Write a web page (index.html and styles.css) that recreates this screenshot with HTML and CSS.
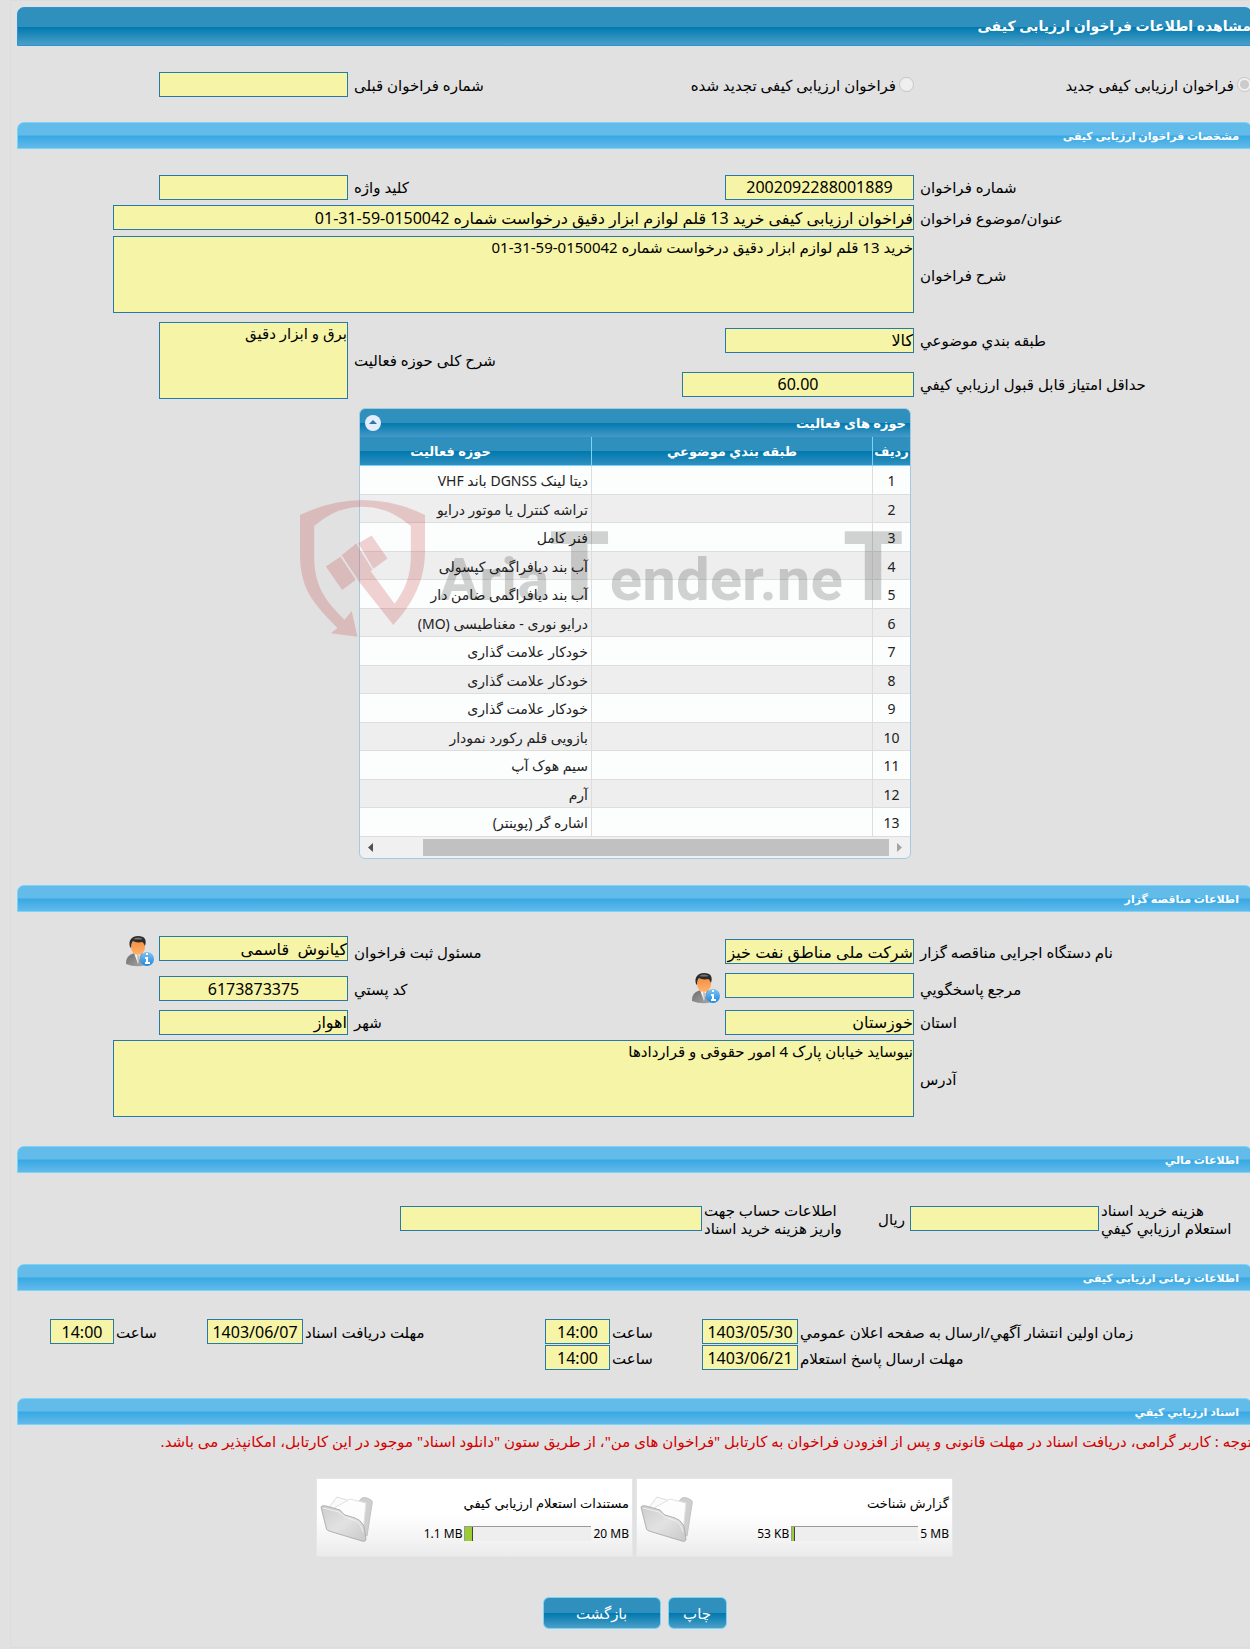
FILE: index.html
```html
<!DOCTYPE html>
<html lang="fa" dir="rtl">
<head>
    <meta charset="UTF-8">
    <meta name="viewport" content="width=device-width, initial-scale=1.0">
    <title>مشاهده اطلاعات فراخوان ارزیابی کیفی</title>
    <link rel="stylesheet" href="styles.css">
</head>
<body>

<!-- shared icons -->
<svg class="sprite" aria-hidden="true">
    <defs>
        <linearGradient id="skin" x1="0" y1="0" x2="0" y2="1">
            <stop offset="0" stop-color="#f58a3c"/>
            <stop offset="1" stop-color="#ffb36b"/>
        </linearGradient>
        <linearGradient id="suit" x1="0" y1="0" x2="1" y2="1">
            <stop offset="0" stop-color="#6c6c6c"/>
            <stop offset="1" stop-color="#a9a9a9"/>
        </linearGradient>
        <linearGradient id="info" x1="0" y1="0" x2="0" y2="1">
            <stop offset="0" stop-color="#7cc4f6"/>
            <stop offset="1" stop-color="#1f86dc"/>
        </linearGradient>
        <linearGradient id="flap" x1="0" y1="0" x2="1" y2="1">
            <stop offset="0" stop-color="#cccccc"/>
            <stop offset="0.5" stop-color="#e2e2e2"/>
            <stop offset="1" stop-color="#c8c8c8"/>
        </linearGradient>
    </defs>
    <symbol id="person" viewBox="0 0 28 31">
        <path d="M0 27C0 21 4 18 9 17L15 17C19 18 20 21 20 24V29Q10 32 0 28Z" fill="url(#suit)"/>
        <path d="M8 17L12 28L15 17Z" fill="#f2f2f2"/>
        <path d="M11 19L12 28L14 20Z" fill="#bcbcbc"/>
        <ellipse cx="12" cy="11" rx="7" ry="8" fill="url(#skin)"/>
        <path d="M4 11C2 4 6 0 12 0C19 0 21 4 19 10C18 8 17 6 16 6C12 7 9 6 7 5Q5 7 5 12Z" fill="#2c2c2c"/>
        <path d="M7 3Q12 0 17 3Q12 4 7 3Z" fill="#777"/>
        <circle cx="21" cy="23" r="7" fill="url(#info)"/>
        <path d="M19 21H22V26H24V28H19V26H20V23H19ZM20 17H22V19H20Z" fill="#fff"/>
    </symbol>
    <symbol id="folder" viewBox="0 0 54 48">
        <path d="M12 14L30 6L38 8L42 4Q44 3 47 4L51 6Q53 7 52 10L47 42L40 40Z" fill="#cfcfcf" stroke="#c2c2c2"/>
        <path d="M10 12L17 3L40 10L43 36L14 30Z" fill="#fafafa" stroke="#dedede"/>
        <path d="M14 14L30 5L46 9L43 38L14 30Z" fill="#fdfdfd" stroke="#e2e2e2"/>
        <path d="M1 13Q2 11 6 12L20 16Q23 20 25 21L35 24Q40 25 44 32L46 46Q45 48 42 47L9 37Q6 36 6 33Z" fill="url(#flap)" stroke="#b0b0b0"/>
        <path d="M3 14L19 18L25 23L36 27Q41 30 43 38" fill="none" stroke="#efefef"/>
    </symbol>
</svg>

<main class="panel">
    <h1 class="title-bar">مشاهده اطلاعات فراخوان ارزیابی کیفی</h1>

    <div class="form-grid call-type">
        <label class="radio"><input type="radio" name="callType" checked disabled>فراخوان ارزیابی کیفی جدید</label>
        <div class="pair">
            <label class="radio"><input type="radio" name="callType" disabled>فراخوان ارزیابی کیفی تجدید شده</label>
            <label class="label" for="prevNo">شماره فراخوان قبلی</label>
        </div>
        <div class="col-left"><input class="field" id="prevNo" type="text" readonly></div>
    </div>

    <h2 class="section-bar">مشخصات فراخوان ارزیابی کیفی</h2>
    <div class="form-grid call-info">
        <label class="label" for="callNo">شماره فراخوان</label>
        <input class="field center" id="callNo" type="text" value="2002092288001889" readonly>
        <label class="label" for="keyword">کلید واژه</label>
        <div class="col-left"><input class="field" id="keyword" type="text" readonly></div>

        <label class="label" for="subject">عنوان/موضوع فراخوان</label>
        <input class="field wide" id="subject" type="text" value="فراخوان ارزیابی کیفی خرید 13 قلم لوازم ابزار دقیق درخواست شماره 0150042-59-31-01" readonly>

        <label class="label" for="description">شرح فراخوان</label>
        <textarea class="field area wide" id="description" readonly>خرید 13 قلم لوازم ابزار دقیق درخواست شماره 0150042-59-31-01</textarea>

        <label class="label" for="category">طبقه بندي موضوعي</label>
        <input class="field" id="category" type="text" value="کالا" readonly>
        <label class="label two-rows" for="scope">شرح کلی حوزه فعالیت</label>
        <div class="col-left two-rows"><textarea class="field area" id="scope" readonly>برق و ابزار دقیق</textarea></div>

        <label class="label" for="minScore">حداقل امتیاز قابل قبول ارزیابي کیفي</label>
        <input class="field center score" id="minScore" type="text" value="60.00" readonly>
    </div>

    <div class="activity">
        <div class="activity-caption">
            <span>حوزه های فعالیت</span>
            <button class="collapse" type="button" aria-label="بستن">
                <svg width="16" height="16" viewBox="0 0 16 16"><circle cx="8" cy="8" r="8" fill="#e3edfb"/><path d="M4 9L8 5L12 9Z" fill="#2779aa"/></svg>
            </button>
        </div>
        <table class="activity-table">
            <thead>
                <tr><th class="col-no">ردیف</th><th class="col-cat">طبقه بندي موضوعي</th><th>حوزه فعالیت</th></tr>
            </thead>
            <tbody>
                <tr><td>1</td><td></td><td>دیتا لینک DGNSS باند VHF</td></tr>
                <tr><td>2</td><td></td><td>تراشه کنترل یا موتور درایو</td></tr>
                <tr><td>3</td><td></td><td>فنر کامل</td></tr>
                <tr><td>4</td><td></td><td>آب بند دیافراگمی کپسولی</td></tr>
                <tr><td>5</td><td></td><td>آب بند دیافراگمی ضامن دار</td></tr>
                <tr><td>6</td><td></td><td>درایو نوری - مغناطیسی (MO)</td></tr>
                <tr><td>7</td><td></td><td>خودکار علامت گذاری</td></tr>
                <tr><td>8</td><td></td><td>خودکار علامت گذاری</td></tr>
                <tr><td>9</td><td></td><td>خودکار علامت گذاری</td></tr>
                <tr><td>10</td><td></td><td>بازویی قلم رکورد نمودار</td></tr>
                <tr><td>11</td><td></td><td>سیم هوک آپ</td></tr>
                <tr><td>12</td><td></td><td>آرم</td></tr>
                <tr><td>13</td><td></td><td>اشاره گر (پوینتر)</td></tr>
            </tbody>
        </table>
        <div class="scrollbar">
            <span class="arrow arrow-right"></span>
            <span class="thumb"></span>
            <span class="arrow arrow-left"></span>
        </div>

        <div class="watermark" dir="ltr">
            <svg class="shield" viewBox="48 300 300 412" preserveAspectRatio="none">
                <path d="M48 345Q125 300 198 300Q275 300 348 345V455C348 540 320 610 272 676L186 540L215 510L275 612C300 570 314 530 314 470V378Q260 320 198 320Q135 320 82 378V470C82 560 110 605 155 660L172 634L186 711L122 701L138 685C80 610 48 570 48 460Z"/>
                <path d="M110 500L145 471L182 540L149 571ZM148 466L183 431L222 510L187 540ZM188 430L220 407L258 476L224 507Z"/>
            </svg>
            <span class="brand">Aria<b>T</b>ender.ne<b>T</b></span>
        </div>
    </div>

    <h2 class="section-bar">اطلاعات مناقصه گزار</h2>
    <div class="form-grid organizer">
        <label class="label" for="org">نام دستگاه اجرایی مناقصه گزار</label>
        <input class="field" id="org" type="text" value="شرکت ملی مناطق نفت خیز جنوب" readonly>
        <label class="label" for="registrar">مسئول ثبت فراخوان</label>
        <div class="col-left top">
            <input class="field" id="registrar" type="text" value="کیانوش  قاسمی" readonly>
            <svg class="person"><use href="#person"/></svg>
        </div>

        <label class="label" for="contact">مرجع پاسخگویي</label>
        <div class="with-icon top">
            <input class="field" id="contact" type="text" readonly>
            <svg class="person"><use href="#person"/></svg>
        </div>
        <label class="label" for="postal">کد پستي</label>
        <div class="col-left"><input class="field center" id="postal" type="text" value="6173873375" readonly></div>

        <label class="label" for="province">استان</label>
        <input class="field" id="province" type="text" value="خوزستان" readonly>
        <label class="label" for="city">شهر</label>
        <div class="col-left"><input class="field" id="city" type="text" value="اهواز" readonly></div>

        <label class="label" for="address">آدرس</label>
        <textarea class="field area wide" id="address" readonly>نیوساید خیابان پارک 4 امور حقوقی و قراردادها</textarea>
    </div>

    <h2 class="section-bar">اطلاعات مالي</h2>
    <div class="finance">
        <label class="two-line doc-cost" for="docCost">هزینه خرید اسناد<br>استعلام ارزیابي کیفي</label>
        <input class="field" id="docCost" type="text" readonly>
        <span class="unit">ریال</span>
        <label class="two-line" for="account">اطلاعات حساب جهت<br>واریز هزینه خرید اسناد</label>
        <input class="field account" id="account" type="text" readonly>
    </div>

    <h2 class="section-bar">اطلاعات زمانی ارزیابی کیفی</h2>
    <div class="schedule">
        <label for="pubDate">زمان اولین انتشار آگهي/ارسال به صفحه اعلان عمومي</label>
        <input class="field center" id="pubDate" type="text" value="1403/05/30" readonly>
        <label for="pubTime">ساعت</label>
        <input class="field center" id="pubTime" type="text" value="14:00" readonly>
        <label for="docDate">مهلت دریافت اسناد</label>
        <input class="field center" id="docDate" type="text" value="1403/06/07" readonly>
        <label for="docTime">ساعت</label>
        <input class="field center" id="docTime" type="text" value="14:00" readonly>

        <label for="ansDate">مهلت ارسال پاسخ استعلام</label>
        <input class="field center" id="ansDate" type="text" value="1403/06/21" readonly>
        <label for="ansTime">ساعت</label>
        <input class="field center" id="ansTime" type="text" value="14:00" readonly>
    </div>

    <h2 class="section-bar">اسناد ارزیابي کیفي</h2>
    <p class="notice">توجه : کاربر گرامی، دریافت اسناد در مهلت قانونی و پس از افزودن فراخوان به کارتابل "فراخوان های من"، از طریق ستون "دانلود اسناد" موجود در این کارتابل، امکانپذیر می باشد.</p>

    <div class="docs">
        <div class="doc">
            <div class="doc-body">
                <div class="doc-name">گزارش شناخت</div>
                <div class="usage">
                    <bdi>5 MB</bdi>
                    <div class="meter"><div class="used" style="width: 3px"></div></div>
                    <bdi>53 KB</bdi>
                </div>
            </div>
            <svg class="folder"><use href="#folder"/></svg>
        </div>
        <div class="doc">
            <div class="doc-body">
                <div class="doc-name">مستندات استعلام ارزیابي کیفي</div>
                <div class="usage">
                    <bdi>20 MB</bdi>
                    <div class="meter"><div class="used" style="width: 8px"></div></div>
                    <bdi>1.1 MB</bdi>
                </div>
            </div>
            <svg class="folder"><use href="#folder"/></svg>
        </div>
    </div>

    <div class="actions">
        <button class="btn" type="button">چاپ</button>
        <button class="btn btn-back" type="button">بازگشت</button>
    </div>
</main>

</body>
</html>
```
FILE: styles.css
```css
* {
    box-sizing: border-box;
}
body {
    margin: 0;
    background: #e1e1e1;
    color: #000;
    font-family: Tahoma, "Noto Sans", "DejaVu Sans", sans-serif;
    font-size: 15px;
    line-height: 20px;
    overflow-x: hidden;
}
.sprite {
    position: absolute;
    width: 0;
    height: 0;
}
.panel {
    margin: 0 -2px 0 10px;
    padding: 6px 0 18px 6px;
    border: 1px solid #dcdcdc;
    border-right: 0;
}

/* bars */
.title-bar {
    height: 39px;
    margin: 0;
    line-height: 36px;
    font-size: 14px;
    font-weight: bold;
    color: #fff;
    border: 1px solid #2694d6;
    border-radius: 7px 7px 0 0;
    background: linear-gradient(#2f90be 0, #2f90be 50%, #0078ae 51%, #4ba0c8 100%);
    white-space: nowrap;
}
.section-bar {
    height: 27px;
    margin: 0;
    padding: 0 12px;
    line-height: 26px;
    font-size: 11px;
    font-weight: bold;
    color: #fff;
    border: 1px solid #78d4f8;
    border-radius: 7px 7px 0 0;
    background: linear-gradient(#63bbea 0, #63bbea 49%, #37a8e3 51%, #62baea 100%);
}

/* fields */
.field {
    display: block;
    flex: none;
    width: 189px;
    height: 25px;
    margin: 0;
    padding: 0;
    border: 1px solid #2779aa;
    border-radius: 0;
    background: #f6f4a6;
    color: #000;
    font-family: inherit;
    font-size: 16px;
    outline: none;
}
.center {
    text-align: center;
}
.area {
    height: 77px;
    font-size: 15px;
    line-height: 20px;
    resize: none;
    overflow: hidden;
}
.label {
    padding-left: 6px;
    text-align: left;
    white-space: nowrap;
}
.radio {
    display: flex;
    align-items: center;
    gap: 3px;
    white-space: nowrap;
}
.radio input {
    width: 15px;
    height: 15px;
    margin: 0;
}

/* label, field, label, field */
.form-grid {
    display: grid;
    grid-template-columns: 338fr 189px 377fr 331px;
    row-gap: 6px;
    align-items: center;
}
.call-type {
    padding: 26px 0 25px;
}
.pair {
    grid-column: 2 / 4;
    display: flex;
    align-items: center;
    justify-content: space-between;
}
.call-info {
    grid-template-rows: 24px 25px 77px 42px 34px;
    padding: 26px 0 7px;
}
.organizer {
    grid-template-rows: 31px 31px 24px 77px;
    padding: 24px 0 29px;
}
.wide {
    grid-column: 2 / 5;
    width: auto;
    margin-left: 96px;
}
.score {
    grid-row: 5;
    grid-column: 2 / 4;
    width: 232px;
}
.two-rows {
    grid-row: 4 / 6;
}
.call-info .two-rows.label {
    grid-column: 3;
}
.col-left {
    grid-column: 4;
    display: flex;
    gap: 5px;
}
.with-icon {
    display: flex;
    gap: 5px;
}
.top {
    align-self: start;
}
.person {
    flex: none;
    width: 28px;
    height: 31px;
}

/* activity table */
.activity {
    position: relative;
    width: 552px;
    margin: 0 341px 26px auto;
    border: 1px solid #a6c9e2;
    border-radius: 6px;
    background: #f0f0f0;
    font-size: 13px;
}
.activity-caption {
    display: flex;
    align-items: center;
    justify-content: space-between;
    height: 28px;
    padding: 0 4px 0 5px;
    color: #fff;
    font-weight: bold;
    border-bottom: 1px solid #4297d7;
    border-radius: 5px 5px 0 0;
    background: linear-gradient(#2f90be 0, #2f90be 50%, #0078ae 51%, #4297c4 100%);
}
.collapse {
    height: 16px;
    padding: 0;
    border: 0;
    background: none;
}
.collapse svg {
    display: block;
}
.activity-table {
    width: 100%;
    border-collapse: separate;
    border-spacing: 0;
    table-layout: fixed;
    color: #222;
}
.activity-table th {
    height: 29px;
    padding: 0;
    color: #fff;
    border-left: 1px solid #78d4f8;
    border-bottom: 1px solid #78d4f8;
    background: linear-gradient(#2f90be 0, #2f90be 50%, #0078ae 51%, #2f90be 100%);
}
.col-no {
    width: 38px;
}
.col-cat {
    width: 281px;
}
.activity-table th:last-child {
    padding-right: 50px;
    border-left: 0;
}
.activity-table td {
    height: 28px;
    padding: 2px 3px 0;
    border-left: 1px solid #ddd;
    border-bottom: 1px solid #ddd;
    background: #fcfdfd;
    font-size: 14px;
    white-space: nowrap;
}
.activity-table tr:nth-child(odd) td {
    height: 29px;
}
.activity-table tr:nth-child(even) td {
    background: #eee;
}
.activity-table td:first-child {
    text-align: center;
}
.activity-table td:last-child {
    border-left: 0;
}
.scrollbar {
    display: flex;
    align-items: center;
    height: 21px;
}
.arrow {
    width: 21px;
    height: 9px;
    background: #505050;
    clip-path: polygon(8px 50%, 13px 0, 13px 100%);
}
.arrow-right {
    background: #a3a3a3;
    clip-path: polygon(13px 50%, 8px 0, 8px 100%);
}
.thumb {
    width: 466px;
    height: 17px;
    margin-left: auto;
    background: #c1c1c1;
}

/* logo laid over the table */
.watermark {
    position: absolute;
    left: -60px;
    top: 91px;
    display: flex;
    align-items: flex-start;
    pointer-events: none;
}
.shield {
    width: 125px;
    height: 137px;
    fill: #c0272d;
    opacity: 0.2;
}
.brand {
    margin: 30px 0 0 14px;
    font-family: Roboto, "Liberation Sans", sans-serif;
    font-size: 60px;
    font-weight: bold;
    line-height: 100px;
    color: #000;
    opacity: 0.17;
    white-space: nowrap;
}
.brand b {
    font-size: 96px;
    line-height: 60px;
}

/* finance */
.finance {
    display: flex;
    align-items: center;
    height: 91px;
}
.two-line {
    width: 140px;
    padding-left: 2px;
    line-height: 18px;
    text-align: left;
    white-space: nowrap;
}
.doc-cost {
    width: 153px;
}
.unit {
    width: 68px;
    padding-right: 5px;
}
.account {
    width: 302px;
}

/* dates */
.schedule {
    display: grid;
    grid-template-columns: 454px 96px 92px 65px 242px 96px 93px 64px;
    row-gap: 1px;
    align-items: center;
    padding: 28px 0;
}
.schedule label {
    padding-left: 2px;
    text-align: left;
    white-space: nowrap;
}
.schedule .field {
    width: 100%;
}

/* documents */
.notice {
    margin: 0;
    padding-top: 6px;
    height: 53px;
    line-height: 20px;
    color: #d40000;
    white-space: nowrap;
}
.docs {
    display: flex;
    justify-content: center;
    gap: 3px;
}
.doc {
    display: flex;
    align-items: center;
    justify-content: space-between;
    width: 317px;
    height: 79px;
    padding: 0 3px;
    border: 1px solid #e6e6e6;
    background: linear-gradient(#fff 0, #fff 45%, #f3f3f3 80%, #ebebeb 100%);
}
.doc-name {
    margin-bottom: 14px;
    font-size: 13px;
    line-height: 18px;
}
.usage {
    display: flex;
    align-items: center;
    gap: 2px;
    font-size: 12px;
    line-height: 16px;
}
.meter {
    display: flex;
    justify-content: flex-end;
    width: 127px;
    height: 15px;
    background: #eee;
    border-top: 1px solid #999;
    border-left: 1px solid #999;
}
.used {
    background: #9acd32;
    border-right: 1px solid #444;
}
.folder {
    flex: none;
    width: 54px;
    height: 48px;
}

.actions {
    display: flex;
    justify-content: center;
    gap: 7px;
    margin-top: 40px;
}
.btn {
    width: 59px;
    height: 32px;
    padding: 0;
    border: 1px solid #78d4f8;
    border-radius: 6px;
    color: #fff;
    font-family: inherit;
    font-size: 15px;
    background: linear-gradient(#2f90be 0, #2f90be 50%, #0078ae 51%, #4ba0c8 100%);
}
.btn-back {
    width: 118px;
}
```
